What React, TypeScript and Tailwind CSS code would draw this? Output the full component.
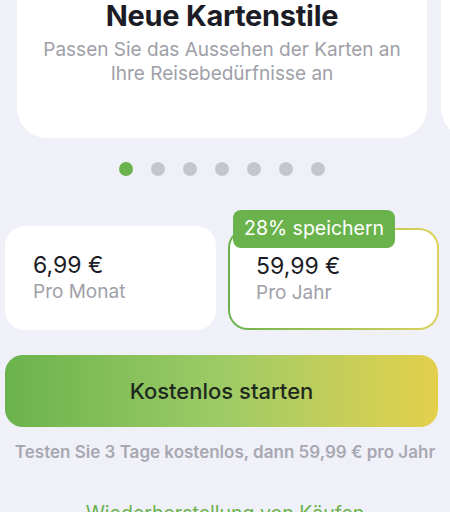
export default function App() {
  const dots = [0, 1, 2, 3, 4, 5, 6]

  return (
    <div className="h-[512px] w-[450px] overflow-hidden bg-[#f0f1f8] font-['Inter',sans-serif]">
      {/* carousel */}
      <div className="-mt-[60px] flex gap-[14px] pl-[17px]">
        <div className="flex h-[198px] w-[410px] shrink-0 flex-col items-center rounded-[30px] bg-white pt-[58px]">
          <h1 className="text-[29px] font-bold leading-[36px] tracking-[-0.3px] text-[#1c1c26]">Neue Kartenstile</h1>
          <p className="mt-[4px] text-center text-[19px] leading-[24px] text-[#a0a0a8]">
            Passen Sie das Aussehen der Karten an
            <br />
            Ihre Reisebedürfnisse an
          </p>
        </div>
        <div className="h-[198px] w-[410px] shrink-0 rounded-[30px] bg-white" />
      </div>

      <div className="mt-[24px] flex justify-center gap-[18px] pr-[6px]">
        {dots.map((d) => (
          <span
            key={d}
            className={d === 0 ? 'h-[14px] w-[14px] rounded-full bg-[#6ab34c]' : 'h-[14px] w-[14px] rounded-full bg-[#c5c5cd]'}
          />
        ))}
      </div>

      {/* plans */}
      <div className="mt-[50px] ml-[5px] flex w-[434px] gap-[12px]">
        <div className="flex h-[104px] w-[211px] flex-col justify-center rounded-[20px] bg-white px-[28px]">
          <div className="text-[23px] leading-[28px] text-[#1c1c26]">6,99 €</div>
          <div className="text-[19px] leading-[26px] text-[#a0a0a8]">Pro Monat</div>
        </div>
        <div className="relative mt-[2px] w-[211px]">
          <div className="h-[102px] rounded-[20px] bg-gradient-to-r from-[#6ab34c] to-[#dcd35c] p-[2px]">
            <div className="flex h-full flex-col justify-center rounded-[18px] bg-white px-[26px]">
              <div className="text-[23px] leading-[28px] text-[#1c1c26]">59,99 €</div>
              <div className="text-[19px] leading-[26px] text-[#a0a0a8]">Pro Jahr</div>
            </div>
          </div>
          <span className="absolute -top-[18px] left-[5px] flex h-[38px] items-center rounded-[8px] bg-[#6ab34c] px-[11px] text-[19.5px] text-white">
            28% speichern
          </span>
        </div>
      </div>

      <button className="mt-[25px] ml-[5px] flex h-[72px] w-[433px] items-center justify-center rounded-[18px] bg-gradient-to-r from-[#6ab34c] via-[#9dcb66] to-[#e3d04b] text-[22px] font-medium text-[#1e2a1e]">
        Kostenlos starten
      </button>

      <p className="mt-[14px] text-center text-[17px] font-semibold leading-[22px] text-[#a8a8b3]">
        Testen Sie 3 Tage kostenlos, dann 59,99 € pro Jahr
      </p>

      <p className="mt-[37px] text-center text-[19.5px] leading-[26px] text-[#6ab34c]">Wiederherstellung von Käufen</p>
    </div>
  )
}
